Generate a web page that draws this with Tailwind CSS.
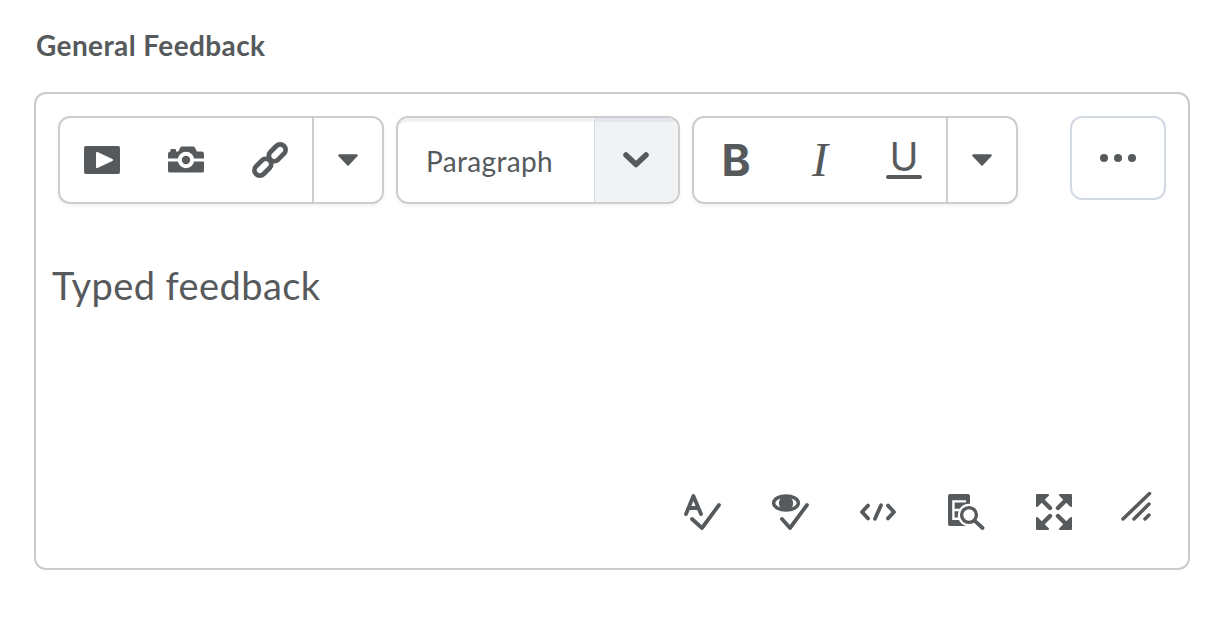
<!DOCTYPE html>
<html>
<head>
<meta charset="utf-8">
<script src="https://cdn.jsdelivr.net/npm/@tailwindcss/browser@4"></script>
</head>
<body class="bg-white font-['Lato',sans-serif] text-[#565a5c] overflow-hidden">
<div class="w-[1216px] h-[618px] pt-[27px] pl-[34px]">
  <div class="pl-[2px] h-[36px] mb-[29px] text-[28px] tracking-[0.4px] leading-[36px] font-bold">General Feedback</div>
  <div class="w-[1156px] h-[478px] border-2 border-[#cbcbcb] rounded-[12px]">
    <div class="flex items-start gap-[12px] pt-[22px] pl-[22px] pr-[22px]">
      <!-- group 1 -->
      <div class="flex w-[326px] h-[88px] border-2 border-[#cdcdcd] rounded-[12px] shadow-[0_2px_4px_rgba(0,0,0,0.05)]">
        <div class="flex items-center gap-[48px] pl-[24px] pr-[24px] border-r-2 border-[#cdcdcd] w-[254px]">
          <svg class="w-[36px] h-[36px] shrink-0" viewBox="0 0 18 18"><rect x="0" y="2" width="18" height="14" rx="1" fill="#565a5c"/><path d="M6.500 5.500L14 9L6.500 12.500Z" fill="#fff" stroke="#fff" stroke-linejoin="round"/></svg>
          <svg class="w-[36px] h-[36px] shrink-0" viewBox="0 0 18 18"><path d="M0 6.200Q0 4.800 1.200 4.800V4Q1.200 3.500 1.800 3.500H3.400Q4 3.500 4 4V4.800H5.200L6 3Q6.300 2.300 7 2.300H12.500Q13.200 2.300 13.600 3L14.400 4.800H16.800Q18 4.800 18 6.200V8.200H0ZM0 9.800H18V14.500Q18 15.300 17 15.300H1Q0 15.300 0 14.500Z" fill="#565a5c"/><circle cx="9" cy="9" r="4.100" fill="#fff"/><circle cx="9" cy="9" r="2.100" fill="#565a5c"/></svg>
          <svg class="w-[36px] h-[36px] shrink-0" viewBox="0 0 18 18" fill="none" stroke="#565a5c" stroke-width="2.400"><rect x="7.800" y="2.700" width="9.600" height="5.400" rx="2.700" transform="rotate(-45 12.600 5.400)"/><rect x="0.600" y="9.900" width="9.600" height="5.400" rx="2.700" transform="rotate(-45 5.400 12.600)"/></svg>
        </div>
        <div class="flex-1 flex items-center justify-center">
          <svg class="w-[20px] h-[12px]" viewBox="0 0 20 12"><path d="M1.500 1.500H18.500L10 10.500Z" fill="#565a5c" stroke="#565a5c" stroke-width="2.500" stroke-linejoin="round"/></svg>
        </div>
      </div>
      <!-- group 2 -->
      <div class="flex w-[284px] h-[88px] border-2 border-[#cdcdcd] rounded-[12px] overflow-hidden shadow-[0_2px_4px_rgba(0,0,0,0.05)]">
        <div class="w-[196px] border-t-[4px] border-[#f1f2f4] pl-[28px] pb-[2px] flex items-center text-[28px] tracking-[0.33px] rounded-tl-[10px]">Paragraph</div>
        <div class="flex-1 bg-[#f1f2f4] border-l border-[#d3d9e3] border-t-[4px] border-t-[#e3e6ec] flex items-center justify-center pr-[2px]">
          <svg class="w-[26px] h-[16px] mt-[-4px] overflow-visible" viewBox="0 0 26 16" fill="none"><path d="M3 3L13 12.500L23 3" stroke="#565a5c" stroke-width="5.500" stroke-linecap="round" stroke-linejoin="round"/></svg>
        </div>
      </div>
      <!-- group 3 -->
      <div class="flex w-[326px] h-[88px] border-2 border-[#cdcdcd] rounded-[12px] shadow-[0_2px_4px_rgba(0,0,0,0.05)]">
        <div class="flex items-center gap-[48px] pl-[24px] pr-[24px] border-r-2 border-[#cdcdcd] w-[254px]">
          <span class="w-[36px] h-[36px] flex items-center justify-center font-['Inter',sans-serif] text-[44px] leading-none font-bold">B</span>
          <span class="w-[36px] h-[36px] flex items-center justify-center font-['Liberation_Serif',serif] italic text-[48px] leading-none">I</span>
          <span class="w-[36px] h-[38px] flex flex-col items-center justify-between">
            <span class="font-['Inter',sans-serif] text-[39px] leading-[32px] h-[32px]">U</span>
            <span class="w-[36px] h-[4px] rounded-full bg-[#565a5c]"></span>
          </span>
        </div>
        <div class="flex-1 flex items-center justify-center">
          <svg class="w-[20px] h-[12px]" viewBox="0 0 20 12"><path d="M1.500 1.500H18.500L10 10.500Z" fill="#565a5c" stroke="#565a5c" stroke-width="2.500" stroke-linejoin="round"/></svg>
        </div>
      </div>
      <!-- more -->
      <div class="ml-auto w-[96px] h-[84px] border-2 border-[#d3d9e3] rounded-[12px] flex items-center justify-center gap-[6px]">
        <span class="w-[8px] h-[8px] rounded-full bg-[#565a5c]"></span>
        <span class="w-[8px] h-[8px] rounded-full bg-[#565a5c]"></span>
        <span class="w-[8px] h-[8px] rounded-full bg-[#565a5c]"></span>
      </div>
    </div>
    <div class="mt-[58px] pl-[16px] text-[38px] tracking-[0.4px] leading-[46px]">Typed feedback</div>
    <div class="mt-[186px] flex justify-end gap-[52px] pr-[32px]">
      <svg class="w-[36px] h-[36px] overflow-visible" viewBox="0 0 18 18" fill="none" stroke="#565a5c" stroke-linecap="round" stroke-linejoin="round"><path d="M1 10L4.700 1L8.500 10M2.400 7H7.200" stroke-width="1.900"/><path d="M4 12.500L9 17L17.500 5.500" stroke-width="1.900"/></svg>
      <svg class="w-[36px] h-[36px] overflow-visible" viewBox="0 0 18 18" fill="none" stroke="#565a5c" stroke-linecap="round" stroke-linejoin="round"><ellipse cx="7" cy="4.500" rx="6.200" ry="3.500" stroke-width="1.700"/><circle cx="7" cy="4.500" r="3.600" fill="#565a5c" stroke="none"/><path d="M5 12.500L9 17L17.500 5.500" stroke-width="1.900"/></svg>
      <svg class="w-[36px] h-[36px]" viewBox="0 0 18 18" fill="none" stroke="#565a5c" stroke-width="1.900" stroke-linecap="round" stroke-linejoin="round"><path d="M4 5.800L1 9L4 12.200M14 5.800L17 9L14 12.200M7.500 12.400L10.500 5.600"/></svg>
      <svg class="w-[36px] h-[36px] overflow-visible" viewBox="0 0 18 18" fill="none"><path d="M1 0H10Q11 0 11 1V16H1Q0 16 0 15V1Q0 0 1 0Z" fill="#565a5c"/><path d="M9 3.700H2.700V12.400H6M2.700 8H6" stroke="#fff" stroke-width="1.200"/><circle cx="10.500" cy="10.500" r="5.600" fill="#fff"/><circle cx="10.500" cy="10.500" r="3.700" stroke="#565a5c" stroke-width="1.700"/><path d="M13.400 13.400L17.300 17" stroke="#565a5c" stroke-width="1.900" stroke-linecap="round"/></svg>
      <svg class="w-[36px] h-[36px]" viewBox="0 0 18 18" fill="#565a5c" stroke="#565a5c" stroke-linejoin="round" stroke-linecap="round"><path d="M0.500 0.500H6L0.500 6ZM17.500 0.500H12L17.500 6ZM0.500 17.500H6L0.500 12ZM17.500 17.500H12L17.500 12Z" stroke-width="1"/><path d="M2 2L7 7M16 2L11 7M2 16L7 11M16 16L11 11" stroke-width="2.200"/></svg>
      <svg class="w-[36px] h-[36px] ml-[-4px] overflow-visible" viewBox="0 0 36 36" fill="none" stroke="#565a5c" stroke-width="3.500" stroke-linecap="round"><path d="M3 25L29.500 -0.500M14 25L29 10M25 25L29 21"/></svg>
    </div>
  </div>
</div>
</body>
</html>
